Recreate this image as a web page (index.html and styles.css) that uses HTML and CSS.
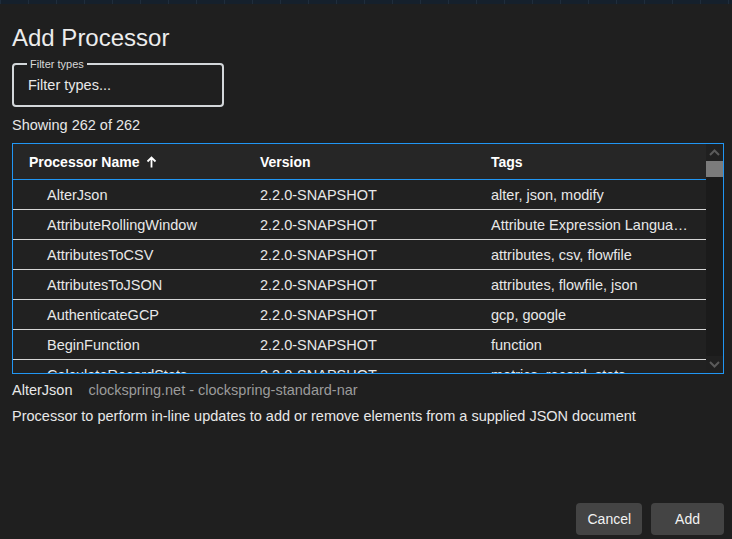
FILE: index.html
```html
<!DOCTYPE html>
<html lang="en">
<head>
  <meta charset="UTF-8">
  <meta name="viewport" content="width=device-width, initial-scale=1.0">
  <title>Add Processor</title>
  <link rel="stylesheet" href="styles.css">
</head>
<body>
  <div class="canvas-strip"></div>

  <div class="dialog">
    <h1 class="dialog-title">Add Processor</h1>

    <fieldset class="filter-field">
      <legend>Filter types</legend>
      <input type="text" placeholder="Filter types...">
    </fieldset>

    <div class="result-count">Showing 262 of 262</div>

    <div class="table-box">
      <div class="table-scroll">
        <table class="proc-table">
          <thead>
            <tr>
              <th class="col-name">
                Processor Name
                <svg class="sort-icon" width="11" height="12" viewBox="0 0 11 12">
                  <path d="M5.5 1.5v10M1.5 5.5l4-4 4 4" fill="none" stroke="#fff" stroke-width="1.8"/>
                </svg>
              </th>
              <th>Version</th>
              <th>Tags</th>
            </tr>
          </thead>
          <tbody>
            <tr><td class="name">AlterJson</td><td>2.2.0-SNAPSHOT</td><td>alter, json, modify</td></tr>
            <tr><td class="name">AttributeRollingWindow</td><td>2.2.0-SNAPSHOT</td><td>Attribute Expression Language, state, data science, rolling, window</td></tr>
            <tr><td class="name">AttributesToCSV</td><td>2.2.0-SNAPSHOT</td><td>attributes, csv, flowfile</td></tr>
            <tr><td class="name">AttributesToJSON</td><td>2.2.0-SNAPSHOT</td><td>attributes, flowfile, json</td></tr>
            <tr><td class="name">AuthenticateGCP</td><td>2.2.0-SNAPSHOT</td><td>gcp, google</td></tr>
            <tr><td class="name">BeginFunction</td><td>2.2.0-SNAPSHOT</td><td>function</td></tr>
            <tr><td class="name">CalculateRecordStats</td><td>2.2.0-SNAPSHOT</td><td>metrics, record, stats</td></tr>
            <tr><td class="name">CaptureChangeMySQL</td><td>2.2.0-SNAPSHOT</td><td>cdc, jdbc, mysql, sql</td></tr>
          </tbody>
        </table>
      </div>
      <div class="scrollbar">
        <div class="scroll-btn">
          <svg width="11" height="7" viewBox="0 0 11 7"><path d="M1 6l4.5-4.5L10 6" fill="none" stroke="#5a5a5a" stroke-width="2"/></svg>
        </div>
        <div class="scroll-track"><div class="scroll-thumb"></div></div>
        <div class="scroll-btn">
          <svg width="11" height="7" viewBox="0 0 11 7"><path d="M1 1l4.5 4.5L10 1" fill="none" stroke="#5a5a5a" stroke-width="2"/></svg>
        </div>
      </div>
    </div>

    <div class="selected-info">
      <span class="selected-name">AlterJson</span>
      <span class="selected-bundle">clockspring.net - clockspring-standard-nar</span>
    </div>
    <p class="selected-desc">Processor to perform in-line updates to add or remove elements from a supplied JSON document</p>

    <div class="dialog-actions">
      <button class="btn btn-cancel">Cancel</button>
      <button class="btn btn-add">Add</button>
    </div>
  </div>
</body>
</html>
```

FILE: styles.css
```css
html, body {
  height: 100%;
}
body {
  margin: 0;
  background-color: #1f1f1f;
  color: #e8e8e8;
  font-family: "Liberation Sans", Arial, sans-serif;
  font-size: 14.5px;
  display: flex;
  flex-direction: column;
  overflow: hidden;
}
.canvas-strip {
  height: 4px;
  flex-shrink: 0;
  background-color: #15202c;
  background-image: repeating-linear-gradient(90deg, #1f2d3c 0 1px, transparent 1px 28px);
}
.dialog {
  flex: 1;
  display: flex;
  flex-direction: column;
  padding: 0 8px 4px 12px;
}
.dialog-title {
  margin: 18px 0 0;
  font-size: 24px;
  font-weight: normal;
  line-height: 32px;
  color: #ececec;
}
.filter-field {
  margin: 4px 0 0;
  padding: 0 14px;
  width: 180px;
  height: 45px;
  border: 2px solid #d3d7da;
  border-radius: 4px;
}
.filter-field legend {
  font-size: 11px;
  color: #d8d8d8;
  padding: 0 3px;
  margin-left: -1px;
  line-height: 12px;
}
.filter-field input {
  width: 100%;
  margin: 0;
  padding: 7px 0 0;
  border: none;
  outline: none;
  background: transparent;
  font-family: inherit;
  font-size: 14.5px;
  color: #e8e8e8;
}
.filter-field input::placeholder {
  color: #e8e8e8;
}
.result-count {
  margin-top: 10px;
  line-height: 16px;
}
.table-box {
  margin-top: 10px;
  height: 229px;
  border: 1px solid #2196f3;
  display: flex;
  background-color: #212121;
}
.table-scroll {
  flex: 1;
  overflow: hidden;
}
.scrollbar {
  width: 17px;
  display: flex;
  flex-direction: column;
  background-color: #1b1b1b;
}
.scroll-btn {
  height: 17px;
  display: flex;
  align-items: center;
  justify-content: center;
  background-color: #202020;
}
.scroll-track {
  flex: 1;
}
.scroll-thumb {
  height: 16px;
  background-color: #7b7b7b;
}
.proc-table {
  width: 100%;
  table-layout: fixed;
  border-collapse: separate;
  border-spacing: 0;
}
.proc-table th {
  height: 35px;
  padding: 0 16px;
  text-align: left;
  font-size: 14px;
  font-weight: bold;
  color: #fff;
  background-color: #262626;
  border-bottom: 1px solid #2196f3;
}
.sort-icon {
  margin-left: 3px;
  vertical-align: -1px;
}
.proc-table td {
  height: 29px;
  padding: 0 16px;
  border-bottom: 1px solid #d6d6d6;
  white-space: nowrap;
  overflow: hidden;
  text-overflow: ellipsis;
}
.proc-table td.name {
  padding-left: 34px;
}
.selected-info {
  margin-top: 8px;
  line-height: 16px;
}
.selected-bundle {
  color: #9b9b9b;
  margin-left: 12px;
}
.selected-desc {
  margin: 10px 0 0;
  line-height: 16px;
}
.dialog-actions {
  margin-top: auto;
  display: flex;
  justify-content: flex-end;
  gap: 9px;
}
.btn {
  height: 32px;
  padding: 0 11px;
  border: none;
  border-radius: 4px;
  background-color: #444;
  color: #f2f2f2;
  font-family: inherit;
  font-size: 14px;
  cursor: pointer;
}
.btn-add {
  padding: 0 24px;
}
.btn:hover {
  background-color: #555;
}
```
